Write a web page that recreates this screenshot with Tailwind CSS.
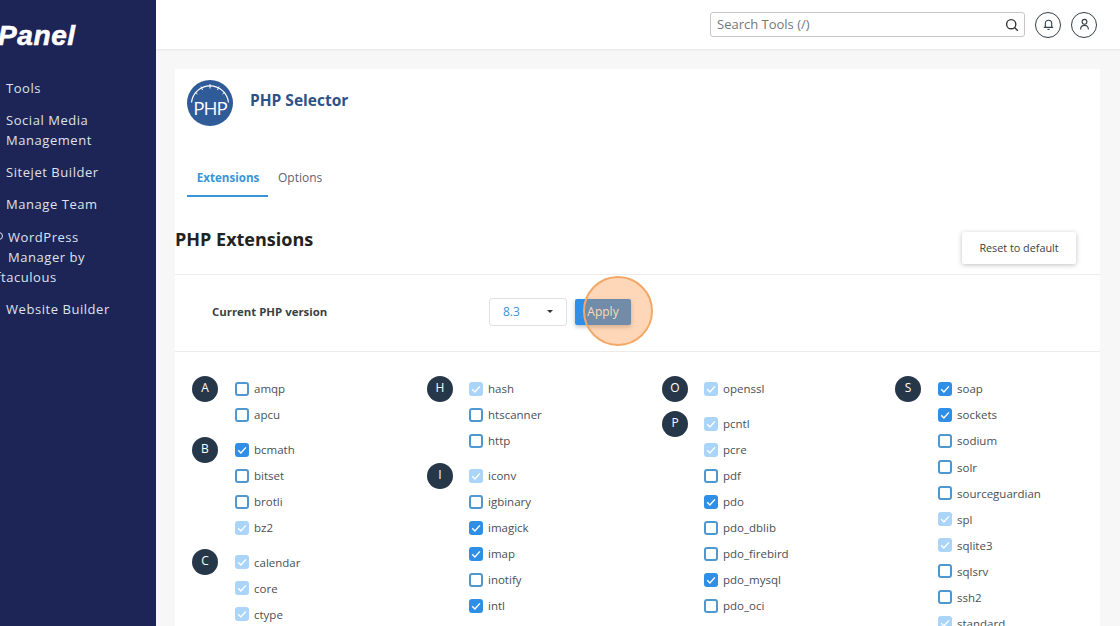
<!DOCTYPE html>
<html lang="en">
<head>
<meta charset="utf-8">
<title>PHP Selector</title>
<script src="https://cdn.jsdelivr.net/npm/@tailwindcss/browser@4"></script>
</head>
<body class="font-['Open_Sans',sans-serif]">
<svg width="0" height="0" class="absolute">
  <symbol id="c" viewBox="0 0 14 14"><path d="M3.2 7.3 5.9 10 10.9 4.4" fill="none" stroke="white" stroke-width="1.4"/></symbol>
</svg>
<div class="flex h-[626px] w-[1120px] overflow-hidden bg-[#f7f7f7]">
  <aside class="w-[156px] shrink-0 overflow-hidden bg-[#1d2556] text-[13px] leading-[20px] tracking-[0.55px] text-[#dfe2ec]">
    <div class="ml-[-2px] mt-[20px] h-[32px] font-['Liberation_Sans',sans-serif] text-[28px] leading-[32px] font-bold italic tracking-[0.6px] text-white [-webkit-text-stroke:0.6px_white]">Panel</div>
    <nav class="mt-[26px] flex flex-col gap-[12px] pl-[6px]">
      <div>Tools</div>
      <div>Social Media<br>Management</div>
      <div>Sitejet Builder</div>
      <div>Manage Team</div>
      <div class="relative mt-[1px] pl-[2px]">
        <span class="absolute left-[-11px] top-[5px] size-[8px] rounded-full border border-[#dfe2ec]"></span>
        <div>WordPress</div>
        <div>Manager by</div>
        <div class="ml-[-28px]">Softaculous</div>
      </div>
      <div>Website Builder</div>
    </nav>
  </aside>
  <div class="min-w-0 flex-1">
    <header class="flex h-[49px] items-center justify-end gap-[10px] bg-white pr-[23px] shadow-[0_1px_2px_rgba(0,0,0,0.08)]">
      <div class="flex h-[25px] w-[315px] items-center justify-between rounded-[3px] border border-[#c4c6c8] pl-[6px] pr-[5px] text-[13px] text-[#74787c]">
        <span>Search Tools (/)</span>
        <svg class="size-[14px]" viewBox="0 0 14 14" fill="none" stroke="#333" stroke-width="1.4"><circle cx="6.2" cy="6.2" r="4.6"/><path d="M9.6 9.6 12.8 12.8"/></svg>
      </div>
      <div class="flex size-[26px] items-center justify-center rounded-full border border-[#333e48]">
        <svg class="size-[13px]" viewBox="0 0 13 13" fill="none" stroke="#333e48" stroke-width="1.1"><path d="M3.3 9V5.4a3.2 3.2 0 0 1 6.4 0V9M1.8 9.4h9.4"/><path d="M5.4 11.4h2.2"/></svg>
      </div>
      <div class="flex size-[26px] items-center justify-center rounded-full border border-[#333e48]">
        <svg class="size-[13px]" viewBox="0 0 13 13" fill="none" stroke="#333e48" stroke-width="1.1"><circle cx="6.5" cy="3.8" r="2.4"/><path d="M2.6 11.4c0-2.6 1.6-4 3.9-4s3.9 1.4 3.9 4"/></svg>
      </div>
    </header>
    <main class="ml-[19px] mr-[20px] mt-[20px] h-[600px] bg-white">
      <div class="flex items-start gap-[17px] pl-[12px] pt-[11px]">
        <svg class="size-[46px]" viewBox="0 0 46 46">
          <circle cx="23" cy="23" r="23" fill="#2f5b98"/>
          <path d="M4.5 22.5A18.6 18.6 0 0 1 41.5 22.5" fill="none" stroke="white" stroke-width="1.2"/>
          <path d="M23 4V8.5M14 6.5 15.5 10M32 6.5 30.5 10M8 12 10.5 14M38 12 35.5 14" stroke="white" stroke-width="1"/>
          <text x="23" y="35" text-anchor="middle" font-family="Open Sans" font-size="19" letter-spacing="-1.2" fill="white">PHP</text>
        </svg>
        <h1 class="mt-[9px] text-[15.5px] leading-[22px] font-bold text-[#2d5286]">PHP Selector</h1>
      </div>
      <div class="ml-[12px] mt-[43px] flex text-[12px] leading-[18px]">
        <div class="h-[28px] w-[81px] border-b-[2px] border-[#3a94d8] pl-[1px] text-center text-[11.6px] leading-[17px] font-bold text-[#3a94d8]">Extensions</div>
        <div class="ml-[10px] text-[#5f6368]">Options</div>
      </div>
      <div class="relative h-[78px] border-b border-[#ececec]">
        <h2 class="pt-[30px] text-[18px] leading-[24px] font-bold text-[#222]">PHP Extensions</h2>
        <button class="absolute right-[24px] top-[35px] h-[32px] w-[114px] rounded-[2px] bg-white text-[10.8px] text-[#3a3f44] shadow-[0_1px_5px_rgba(0,0,0,0.25)]">Reset to default</button>
      </div>
      <div class="relative flex h-[77px] items-center border-b border-[#ececec] pb-[2px] pl-[37px]">
        <div class="w-[277px] pb-[1px] text-[11.4px] font-bold text-[#3a3f44]">Current PHP version</div>
        <div class="flex h-[28px] w-[78px] items-center justify-between rounded-[3px] border border-[#e0e0e0] pb-[1px] pl-[13px] pr-[13px] text-[12px] text-[#3a94d8]">
          <span>8.3</span>
          <span class="size-0 border-x-[3.5px] border-t-[3.5px] border-x-transparent border-t-[#333]"></span>
        </div>
        <button class="ml-[8px] mb-[1px] h-[26px] w-[56px] rounded-[2px] bg-[#2d8fe8] text-[12px] text-white shadow-[0_2px_4px_rgba(0,0,0,0.25)]">Apply</button>
        <div class="absolute left-[408px] top-[1px] size-[70px] rounded-full border-[2.5px] border-[#f4a868] bg-[rgba(250,135,40,0.33)]"></div>
      </div>
      <div class="grid grid-cols-[repeat(4,234px)] pl-[17px] pt-[24px] text-[11.5px] text-[#4a4f54]">

        <div>
          <div class="flex"><div class="size-[26px] rounded-full bg-[#27374a] pb-[2px] text-center text-[12px] leading-[24px] text-white">A</div><div class="ml-[17px]">
            <div class="flex h-[26.05px] items-center gap-[5px]"><span class="size-[14px] rounded-[3px] border-2 border-[#4f97cf]"></span>amqp</div>
            <div class="flex h-[26.05px] items-center gap-[5px]"><span class="size-[14px] rounded-[3px] border-2 border-[#4f97cf]"></span>apcu</div>
          </div></div>
          <div class="mt-[8.5px] flex"><div class="size-[26px] rounded-full bg-[#27374a] text-center text-[12px] leading-[24px] text-white">B</div><div class="ml-[17px]">
            <div class="flex h-[26.05px] items-center gap-[5px]"><svg class="size-[14px] rounded-[3px] bg-[#2f8fe6]"><use href="#c"/></svg>bcmath</div>
            <div class="flex h-[26.05px] items-center gap-[5px]"><span class="size-[14px] rounded-[3px] border-2 border-[#4f97cf]"></span>bitset</div>
            <div class="flex h-[26.05px] items-center gap-[5px]"><span class="size-[14px] rounded-[3px] border-2 border-[#4f97cf]"></span>brotli</div>
            <div class="flex h-[26.05px] items-center gap-[5px]"><svg class="size-[14px] rounded-[3px] bg-[#aad5f8]"><use href="#c"/></svg>bz2</div>
          </div></div>
          <div class="mt-[8.5px] flex"><div class="size-[26px] rounded-full bg-[#27374a] text-center text-[12px] leading-[24px] text-white">C</div><div class="ml-[17px]">
            <div class="flex h-[26.05px] items-center gap-[5px]"><svg class="size-[14px] rounded-[3px] bg-[#aad5f8]"><use href="#c"/></svg>calendar</div>
            <div class="flex h-[26.05px] items-center gap-[5px]"><svg class="size-[14px] rounded-[3px] bg-[#aad5f8]"><use href="#c"/></svg>core</div>
            <div class="flex h-[26.05px] items-center gap-[5px]"><svg class="size-[14px] rounded-[3px] bg-[#aad5f8]"><use href="#c"/></svg>ctype</div>
          </div></div>
        </div>

        <div class="pl-[1px]">
          <div class="flex"><div class="size-[26px] rounded-full bg-[#27374a] text-center text-[12px] leading-[24px] text-white">H</div><div class="ml-[16px]">
            <div class="flex h-[26.05px] items-center gap-[5px]"><svg class="size-[14px] rounded-[3px] bg-[#aad5f8]"><use href="#c"/></svg>hash</div>
            <div class="flex h-[26.05px] items-center gap-[5px]"><span class="size-[14px] rounded-[3px] border-2 border-[#4f97cf]"></span>htscanner</div>
            <div class="flex h-[26.05px] items-center gap-[5px]"><span class="size-[14px] rounded-[3px] border-2 border-[#4f97cf]"></span>http</div>
          </div></div>
          <div class="mt-[8.5px] flex"><div class="size-[26px] rounded-full bg-[#27374a] text-center text-[12px] leading-[24px] text-white">I</div><div class="ml-[16px]">
            <div class="flex h-[26.05px] items-center gap-[5px]"><svg class="size-[14px] rounded-[3px] bg-[#aad5f8]"><use href="#c"/></svg>iconv</div>
            <div class="flex h-[26.05px] items-center gap-[5px]"><span class="size-[14px] rounded-[3px] border-2 border-[#4f97cf]"></span>igbinary</div>
            <div class="flex h-[26.05px] items-center gap-[5px]"><svg class="size-[14px] rounded-[3px] bg-[#2f8fe6]"><use href="#c"/></svg>imagick</div>
            <div class="flex h-[26.05px] items-center gap-[5px]"><svg class="size-[14px] rounded-[3px] bg-[#2f8fe6]"><use href="#c"/></svg>imap</div>
            <div class="flex h-[26.05px] items-center gap-[5px]"><span class="size-[14px] rounded-[3px] border-2 border-[#4f97cf]"></span>inotify</div>
            <div class="flex h-[26.05px] items-center gap-[5px]"><svg class="size-[14px] rounded-[3px] bg-[#2f8fe6]"><use href="#c"/></svg>intl</div>
          </div></div>
        </div>

        <div class="pl-[2px]">
          <div class="flex"><div class="size-[26px] rounded-full bg-[#27374a] text-center text-[12px] leading-[24px] text-white">O</div><div class="ml-[16px]">
            <div class="flex h-[26.05px] items-center gap-[5px]"><svg class="size-[14px] rounded-[3px] bg-[#aad5f8]"><use href="#c"/></svg>openssl</div>
          </div></div>
          <div class="mt-[8.5px] flex"><div class="size-[26px] rounded-full bg-[#27374a] text-center text-[12px] leading-[24px] text-white">P</div><div class="ml-[16px]">
            <div class="flex h-[26.05px] items-center gap-[5px]"><svg class="size-[14px] rounded-[3px] bg-[#aad5f8]"><use href="#c"/></svg>pcntl</div>
            <div class="flex h-[26.05px] items-center gap-[5px]"><svg class="size-[14px] rounded-[3px] bg-[#aad5f8]"><use href="#c"/></svg>pcre</div>
            <div class="flex h-[26.05px] items-center gap-[5px]"><span class="size-[14px] rounded-[3px] border-2 border-[#4f97cf]"></span>pdf</div>
            <div class="flex h-[26.05px] items-center gap-[5px]"><svg class="size-[14px] rounded-[3px] bg-[#2f8fe6]"><use href="#c"/></svg>pdo</div>
            <div class="flex h-[26.05px] items-center gap-[5px]"><span class="size-[14px] rounded-[3px] border-2 border-[#4f97cf]"></span>pdo_dblib</div>
            <div class="flex h-[26.05px] items-center gap-[5px]"><span class="size-[14px] rounded-[3px] border-2 border-[#4f97cf]"></span>pdo_firebird</div>
            <div class="flex h-[26.05px] items-center gap-[5px]"><svg class="size-[14px] rounded-[3px] bg-[#2f8fe6]"><use href="#c"/></svg>pdo_mysql</div>
            <div class="flex h-[26.05px] items-center gap-[5px]"><span class="size-[14px] rounded-[3px] border-2 border-[#4f97cf]"></span>pdo_oci</div>
          </div></div>
        </div>

        <div class="pl-[1px]">
          <div class="flex"><div class="size-[26px] rounded-full bg-[#27374a] text-center text-[12px] leading-[24px] text-white">S</div><div class="ml-[17px]">
            <div class="flex h-[26.05px] items-center gap-[5px]"><svg class="size-[14px] rounded-[3px] bg-[#2f8fe6]"><use href="#c"/></svg>soap</div>
            <div class="flex h-[26.05px] items-center gap-[5px]"><svg class="size-[14px] rounded-[3px] bg-[#2f8fe6]"><use href="#c"/></svg>sockets</div>
            <div class="flex h-[26.05px] items-center gap-[5px]"><span class="size-[14px] rounded-[3px] border-2 border-[#4f97cf]"></span>sodium</div>
            <div class="flex h-[26.05px] items-center gap-[5px]"><span class="size-[14px] rounded-[3px] border-2 border-[#4f97cf]"></span>solr</div>
            <div class="flex h-[26.05px] items-center gap-[5px]"><span class="size-[14px] rounded-[3px] border-2 border-[#4f97cf]"></span>sourceguardian</div>
            <div class="flex h-[26.05px] items-center gap-[5px]"><svg class="size-[14px] rounded-[3px] bg-[#aad5f8]"><use href="#c"/></svg>spl</div>
            <div class="flex h-[26.05px] items-center gap-[5px]"><svg class="size-[14px] rounded-[3px] bg-[#aad5f8]"><use href="#c"/></svg>sqlite3</div>
            <div class="flex h-[26.05px] items-center gap-[5px]"><span class="size-[14px] rounded-[3px] border-2 border-[#4f97cf]"></span>sqlsrv</div>
            <div class="flex h-[26.05px] items-center gap-[5px]"><span class="size-[14px] rounded-[3px] border-2 border-[#4f97cf]"></span>ssh2</div>
            <div class="flex h-[26.05px] items-center gap-[5px]"><svg class="size-[14px] rounded-[3px] bg-[#aad5f8]"><use href="#c"/></svg>standard</div>
          </div></div>
        </div>

      </div>
    </main>
  </div>
</div>
</body>
</html>
